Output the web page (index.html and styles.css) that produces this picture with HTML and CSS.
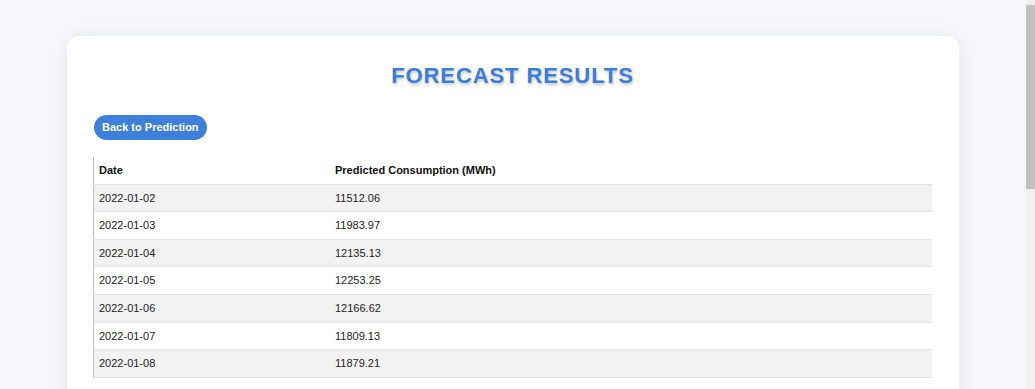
FILE: index.html
```html
<!DOCTYPE html>
<html lang="en">
<head>
<meta charset="utf-8">
<title>Forecast Results</title>
<link rel="stylesheet" href="styles.css">
</head>
<body>
<main class="card">
  <h1 class="title">Forecast Results</h1>
  <div class="actions">
    <a class="btn" href="#">Back to Prediction</a>
  </div>
  <table class="results">
    <thead>
      <tr><th class="col-date">Date</th><th>Predicted Consumption (MWh)</th></tr>
    </thead>
    <tbody>
      <tr><td>2022-01-02</td><td>11512.06</td></tr>
      <tr><td>2022-01-03</td><td>11983.97</td></tr>
      <tr><td>2022-01-04</td><td>12135.13</td></tr>
      <tr><td>2022-01-05</td><td>12253.25</td></tr>
      <tr><td>2022-01-06</td><td>12166.62</td></tr>
      <tr><td>2022-01-07</td><td>11809.13</td></tr>
      <tr><td>2022-01-08</td><td>11879.21</td></tr>
    </tbody>
  </table>
</main>
<div class="scrollbar" aria-hidden="true"><div class="scrollbar-thumb"></div></div>
</body>
</html>
```

FILE: styles.css
```css
html, body {
  margin: 0;
  padding: 0;
}
body {
  background: #f6f7fb;
  font-family: "Liberation Sans", Arial, sans-serif;
  color: #222;
  padding: 36px 0 0 67px;
}
.card {
  width: 892px;
  box-sizing: border-box;
  background: #fff;
  border-radius: 12px;
  box-shadow: 0 0 18px rgba(0, 0, 0, 0.07);
  padding: 27px 27px 40px 26px;
  min-height: 3700px;
}
.title {
  margin: 0 0 27px;
  text-align: center;
  font-size: 22px;
  line-height: 25px;
  font-weight: 700;
  letter-spacing: 0.9px;
  text-transform: uppercase;
  color: #3b7ddb;
  text-shadow: 1px 2px 3px rgba(0, 0, 0, 0.22);
}
.actions {
  display: flex;
  margin: 0 0 17px 1px;
}
.btn {
  display: block;
  background: #3d80db;
  color: #fff;
  font-size: 11px;
  line-height: 13px;
  font-weight: 700;
  text-decoration: none;
  padding: 6px 8px;
  border-radius: 13px;
}
.results {
  width: 839px;
  border-collapse: collapse;
  border-left: 1px solid #bdbdbd;
  font-size: 11px;
}
.results th,
.results td {
  text-align: left;
  padding: 7px 6px 7px 5px;
  line-height: 12.6px;
  border-bottom: 1px solid #e3e3e3;
}
.results th {
  font-weight: 700;
  color: #111;
}
.results .col-date {
  width: 225px;
}
.results tbody tr:nth-child(odd) {
  background: #f2f2f2;
}
.scrollbar {
  position: fixed;
  top: 0;
  right: 0;
  width: 9px;
  height: 100vh;
  background: #f0f0f0;
}
.scrollbar-thumb {
  margin-top: 5px;
  height: 184px;
  background: #c1c1c1;
}
```
